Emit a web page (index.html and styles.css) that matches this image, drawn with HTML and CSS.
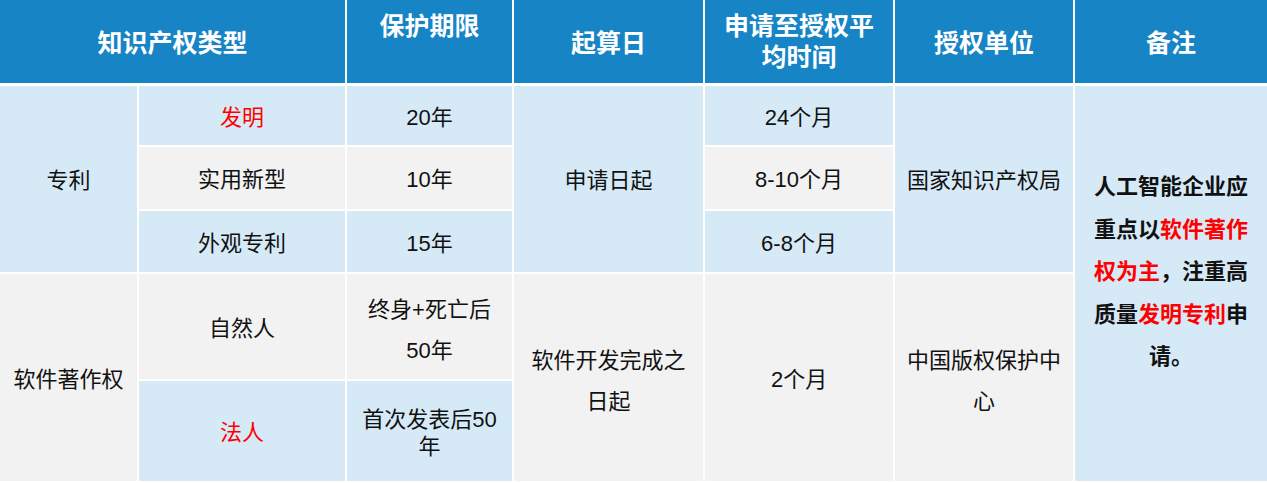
FILE: index.html
```html
<!DOCTYPE html>
<html lang="zh-CN">
<head>
<meta charset="utf-8">
<title>知识产权类型</title>
<link rel="stylesheet" href="styles.css">
</head>
<body>
<table class="ip-table">
  <colgroup>
    <col class="c1"><col class="c2"><col class="c3"><col class="c4"><col class="c5"><col class="c6"><col class="c7">
  </colgroup>
  <thead>
    <tr class="r-head">
      <th colspan="2">知识产权类型</th>
      <th class="top">保护期限</th>
      <th>起算日</th>
      <th class="top">申请至授权平<br>均时间</th>
      <th>授权单位</th>
      <th class="last">备注</th>
    </tr>
  </thead>
  <tbody>
    <tr class="r1">
      <td rowspan="3" class="blue">专利</td>
      <td class="blue red">发明</td>
      <td class="blue">20年</td>
      <td rowspan="3" class="blue">申请日起</td>
      <td class="blue">24个月</td>
      <td rowspan="3" class="blue">国家知识产权局</td>
      <td rowspan="5" class="blue note last">人工智能企业应<br>重点以<span class="red">软件著作</span><br><span class="red">权为主</span>，注重高<br>质量<span class="red">发明专利</span>申<br>请。</td>
    </tr>
    <tr class="r2">
      <td class="grey">实用新型</td>
      <td class="grey">10年</td>
      <td class="grey">8-10个月</td>
    </tr>
    <tr class="r3">
      <td class="blue">外观专利</td>
      <td class="blue">15年</td>
      <td class="blue">6-8个月</td>
    </tr>
    <tr class="r4">
      <td rowspan="2" class="grey">软件著作权</td>
      <td class="grey">自然人</td>
      <td class="grey tall">终身+死亡后<br>50年</td>
      <td rowspan="2" class="grey tall">软件开发完成之<br>日起</td>
      <td rowspan="2" class="grey">2个月</td>
      <td rowspan="2" class="grey tall">中国版权保护中<br>心</td>
    </tr>
    <tr class="r5">
      <td class="blue red">法人</td>
      <td class="blue tight">首次发表后50<br>年</td>
    </tr>
  </tbody>
</table>
</body>
</html>
```

FILE: styles.css
```css
html, body {
  margin: 0;
  padding: 0;
  background: #ffffff;
}

.ip-table {
  width: 1267px;
  table-layout: fixed;
  border-collapse: separate;
  border-spacing: 0;
  font-family: "Liberation Sans", "Noto Sans CJK SC", sans-serif;
  color: #111111;
}

.c1 { width: 139px; }
.c2 { width: 208px; }
.c3 { width: 167px; }
.c4 { width: 191px; }
.c5 { width: 190px; }
.c6 { width: 180px; }
.c7 { width: 192px; }

.ip-table th,
.ip-table td {
  padding: 0;
  text-align: center;
  vertical-align: middle;
  border-right: 2px solid #ffffff;
  border-bottom: 2px solid #ffffff;
}

.ip-table th.last,
.ip-table td.last {
  border-right: 0;
}

.ip-table th {
  background: #1784c6;
  color: #ffffff;
  font-family: "Noto Sans CJK SC", sans-serif;
  font-weight: 700;
  font-size: 25px;
  line-height: 31px;
  border-bottom: 3px solid #ffffff;
}

.ip-table th.top {
  vertical-align: top;
  padding-top: 9px;
}

.r-head { height: 86px; }
.r1 { height: 61px; }
.r2 { height: 64px; }
.r3 { height: 63px; }
.r4 { height: 107px; }
.r5 { height: 102px; }

.ip-table td {
  font-size: 22px;
  line-height: 30px;
  padding-top: 4px;
}

.ip-table td.tall {
  line-height: 41px;
  padding-top: 6px;
}

.ip-table td.tight {
  line-height: 27px;
}

.blue { background: #d6e9f7; }
.grey { background: #f2f2f2; }
.red { color: #ff0000; }

.ip-table td.note {
  font-family: "Noto Sans CJK SC", sans-serif;
  font-weight: 700;
  line-height: 42.5px;
  padding-top: 0;
  padding-bottom: 28px;
}
```
